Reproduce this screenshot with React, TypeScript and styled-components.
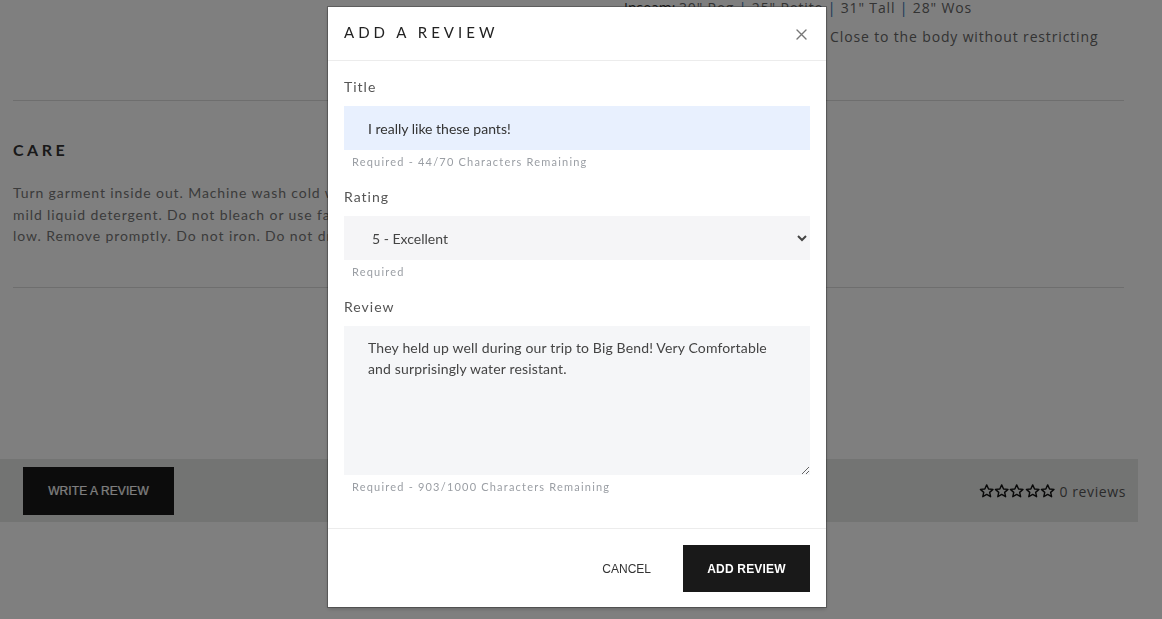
import React, { useState } from 'react';
import styled, { createGlobalStyle } from 'styled-components';

const GlobalStyle = createGlobalStyle`
  html, body {
    margin: 0;
    padding: 0;
    background: #ffffff;
    overflow: hidden;
  }
  body {
    font-family: 'Lato', 'Open Sans', sans-serif;
    color: #333;
  }
  * {
    box-sizing: border-box;
  }
`;

const Page = styled.div`
  width: 1162px;
  height: 619px;
  overflow: hidden;
`;

const Content = styled.div`
  padding: 0 38px 0 13px;
`;

const Specs = styled.div`
  margin-top: -7px;
  padding-left: 611px;
  font-family: 'Open Sans', sans-serif;
  font-size: 14px;
  line-height: 29px;
  letter-spacing: 0.85px;
  color: #666;
  white-space: nowrap;
`;

const SpecLabel = styled.span`
  display: inline-block;
  width: 55px;
  letter-spacing: 0;
  color: #333;
`;

const Pipe = styled.span`
  color: #2c6fad;
`;

const Divider = styled.hr`
  margin: 0;
  border: 0;
  border-top: 1px solid #dcdcdc;
`;

const TopDivider = styled(Divider)`
  margin-top: 49px;
`;

const CareSection = styled.section`
  padding: 39px 0 40px;
`;

const CareTitle = styled.h3`
  margin: 0 0 22px;
  font-size: 16px;
  line-height: 20px;
  font-weight: 700;
  letter-spacing: 3.5px;
  color: #333;
`;

const CareText = styled.p`
  margin: 0;
  font-size: 14px;
  line-height: 21.5px;
  letter-spacing: 0.9px;
  color: #777;
  white-space: nowrap;
`;

const ReviewBar = styled.div`
  margin-top: 171px;
  width: 1138px;
  height: 63px;
  padding: 8px 12px 0 23px;
  background: #e7e9e7;
  display: flex;
  justify-content: space-between;
  align-items: flex-start;
`;

const DarkButton = styled.button`
  border: 0;
  background: #191919;
  color: #ffffff;
  font-family: 'Liberation Sans', Arial, sans-serif;
  font-size: 12px;
  font-weight: 700;
  letter-spacing: 0;
  text-transform: uppercase;
  cursor: pointer;
`;

const WriteButton = styled(DarkButton)`
  width: 151px;
  height: 48px;
  font-weight: 400;
  letter-spacing: 0.1px;
  -webkit-text-stroke: 0.2px #fff;
`;

const Summary = styled.div`
  display: flex;
  align-items: center;
  gap: 4px;
  margin-top: 15px;
  font-family: 'Open Sans', sans-serif;
  font-size: 14px;
  letter-spacing: 0.6px;
  color: #555;
`;

const Stars = styled.div`
  display: flex;
  color: #111;
`;

const Overlay = styled.div`
  position: fixed;
  inset: 0;
  background: rgba(0, 0, 0, 0.5);
`;

const Modal = styled.div`
  position: fixed;
  top: 7px;
  left: 328px;
  width: 498px;
  height: 600px;
  background: #ffffff;
  box-shadow: 0 0 0 1px rgba(0, 0, 0, 0.25), 0 2px 4px rgba(0, 0, 0, 0.2);
  display: flex;
  flex-direction: column;
`;

const ModalHeader = styled.div`
  flex-shrink: 0;
  height: 54px;
  padding: 0 16px;
  display: flex;
  align-items: center;
  justify-content: space-between;
  border-bottom: 1px solid #ececec;
`;

const ModalTitle = styled.h2`
  margin: 0 0 4px;
  font-family: 'Lato', sans-serif;
  font-size: 15px;
  font-weight: 400;
  letter-spacing: 4px;
  color: #222;
`;

const CloseButton = styled.button`
  border: 0;
  background: none;
  padding: 0;
  margin-right: 2px;
  margin-top: 2px;
  width: 14px;
  height: 14px;
  color: #777;
  cursor: pointer;
  display: flex;
  align-items: center;
  justify-content: center;
`;

const ModalBody = styled.div`
  flex: 1;
  min-height: 0;
  overflow: hidden;
  padding: 16px 16px 16px;
`;

const Field = styled.div`
  margin-bottom: 19px;
`;

const Label = styled.label`
  display: block;
  margin-bottom: 9px;
  font-size: 14px;
  line-height: 20px;
  letter-spacing: 1px;
  color: #555;
`;

const controlBase = `
  display: block;
  width: 100%;
  border: 0;
  outline: none;
  font-family: 'Lato', sans-serif;
  font-size: 14px;
  color: #333;
`;

const TextInput = styled.input`
  ${controlBase}
  height: 44px;
  padding: 0 24px;
  background: #e8f0fe;
`;

const Select = styled.select`
  ${controlBase}
  height: 44px;
  padding: 0 8px 0 24px;
  background: #f5f5f7;
  color: #444;
`;

const TextArea = styled.textarea`
  ${controlBase}
  height: 149px;
  padding: 11px 24px 12px;
  line-height: 21px;
  letter-spacing: 0.15px;
  background: #f5f6f8;
  color: #444;
  resize: vertical;
`;

const Hint = styled.div`
  margin-top: 6px;
  padding-left: 8px;
  font-size: 11px;
  line-height: 12px;
  letter-spacing: 1.2px;
  color: #9a9ea4;
`;

const ModalFooter = styled.div`
  flex-shrink: 0;
  height: 79px;
  padding: 16px;
  border-top: 1px solid #ececec;
  display: flex;
  justify-content: flex-end;
  align-items: flex-start;
  gap: 8px;
`;

const CancelButton = styled.button`
  height: 47px;
  padding: 0 24px;
  border: 0;
  background: none;
  font-family: 'Liberation Sans', Arial, sans-serif;
  font-size: 12px;
  color: #333;
  cursor: pointer;
`;

const SubmitButton = styled(DarkButton)`
  width: 127px;
  height: 47px;
  letter-spacing: 0.2px;
`;

const StarIcon = () => (
  <svg width="15.4" height="16" viewBox="0 0 24 24" fill="none" stroke="currentColor" strokeWidth="2.2" strokeLinejoin="round">
    <path d="M12 2.5l2.9 6.3 6.9.7-5.2 4.6 1.5 6.8L12 17.4l-6.1 3.5 1.5-6.8-5.2-4.6 6.9-.7z" />
  </svg>
);

const CloseIcon = () => (
  <svg width="11" height="11" viewBox="0 0 11 11" stroke="currentColor" strokeWidth="1.4" strokeLinecap="round">
    <path d="M1 1l9 9M10 1l-9 9" />
  </svg>
);

const TITLE_MAX = 70;
const REVIEW_MAX = 1000;

export default function App() {
  const [title, setTitle] = useState('I really like these pants!');
  const [rating, setRating] = useState('5');
  const [review, setReview] = useState(
    'They held up well during our trip to Big Bend! Very Comfortable and surprisingly water resistant.'
  );

  return (
    <Page>
      <GlobalStyle />
      <Content>
        <Specs>
          <div>
            <SpecLabel>Inseam:</SpecLabel>
            30" Reg <Pipe>|</Pipe> 25" Petite <Pipe>|</Pipe> 31" Tall <Pipe>|</Pipe> 28" Wos
          </div>
          <div>
            <SpecLabel>Fit:</SpecLabel>
            Slim &amp; well tapered. Close to the body without restricting
          </div>
        </Specs>
        <TopDivider />
        <CareSection>
          <CareTitle>CARE</CareTitle>
          <CareText>
            Turn garment inside out. Machine wash cold with like colors. Use a gentle cycle and k
            <br />
            mild liquid detergent. Do not bleach or use fabric softener. Tumble dry
            <br />
            low. Remove promptly. Do not iron. Do not dry clean.
          </CareText>
        </CareSection>
        <Divider />
      </Content>
      <ReviewBar>
        <WriteButton>Write a review</WriteButton>
        <Summary>
          <Stars>
            {[0, 1, 2, 3, 4].map((i) => (
              <StarIcon key={i} />
            ))}
          </Stars>
          <span>0 reviews</span>
        </Summary>
      </ReviewBar>

      <Overlay />
      <Modal role="dialog" aria-label="Add a review">
        <ModalHeader>
          <ModalTitle>ADD A REVIEW</ModalTitle>
          <CloseButton aria-label="Close">
            <CloseIcon />
          </CloseButton>
        </ModalHeader>
        <ModalBody>
          <Field>
            <Label htmlFor="review-title">Title</Label>
            <TextInput id="review-title" value={title} onChange={(e) => setTitle(e.target.value)} />
            <Hint>Required - {TITLE_MAX - title.length}/{TITLE_MAX} Characters Remaining</Hint>
          </Field>
          <Field>
            <Label htmlFor="review-rating">Rating</Label>
            <Select id="review-rating" value={rating} onChange={(e) => setRating(e.target.value)}>
              <option value="5">5 - Excellent</option>
              <option value="4">4 - Good</option>
              <option value="3">3 - Average</option>
              <option value="2">2 - Poor</option>
              <option value="1">1 - Terrible</option>
            </Select>
            <Hint>Required</Hint>
          </Field>
          <Field>
            <Label htmlFor="review-body">Review</Label>
            <TextArea id="review-body" value={review} onChange={(e) => setReview(e.target.value)} />
            <Hint>Required - {REVIEW_MAX - review.length}/{REVIEW_MAX} Characters Remaining</Hint>
          </Field>
        </ModalBody>
        <ModalFooter>
          <CancelButton>CANCEL</CancelButton>
          <SubmitButton>Add review</SubmitButton>
        </ModalFooter>
      </Modal>
    </Page>
  );
}
